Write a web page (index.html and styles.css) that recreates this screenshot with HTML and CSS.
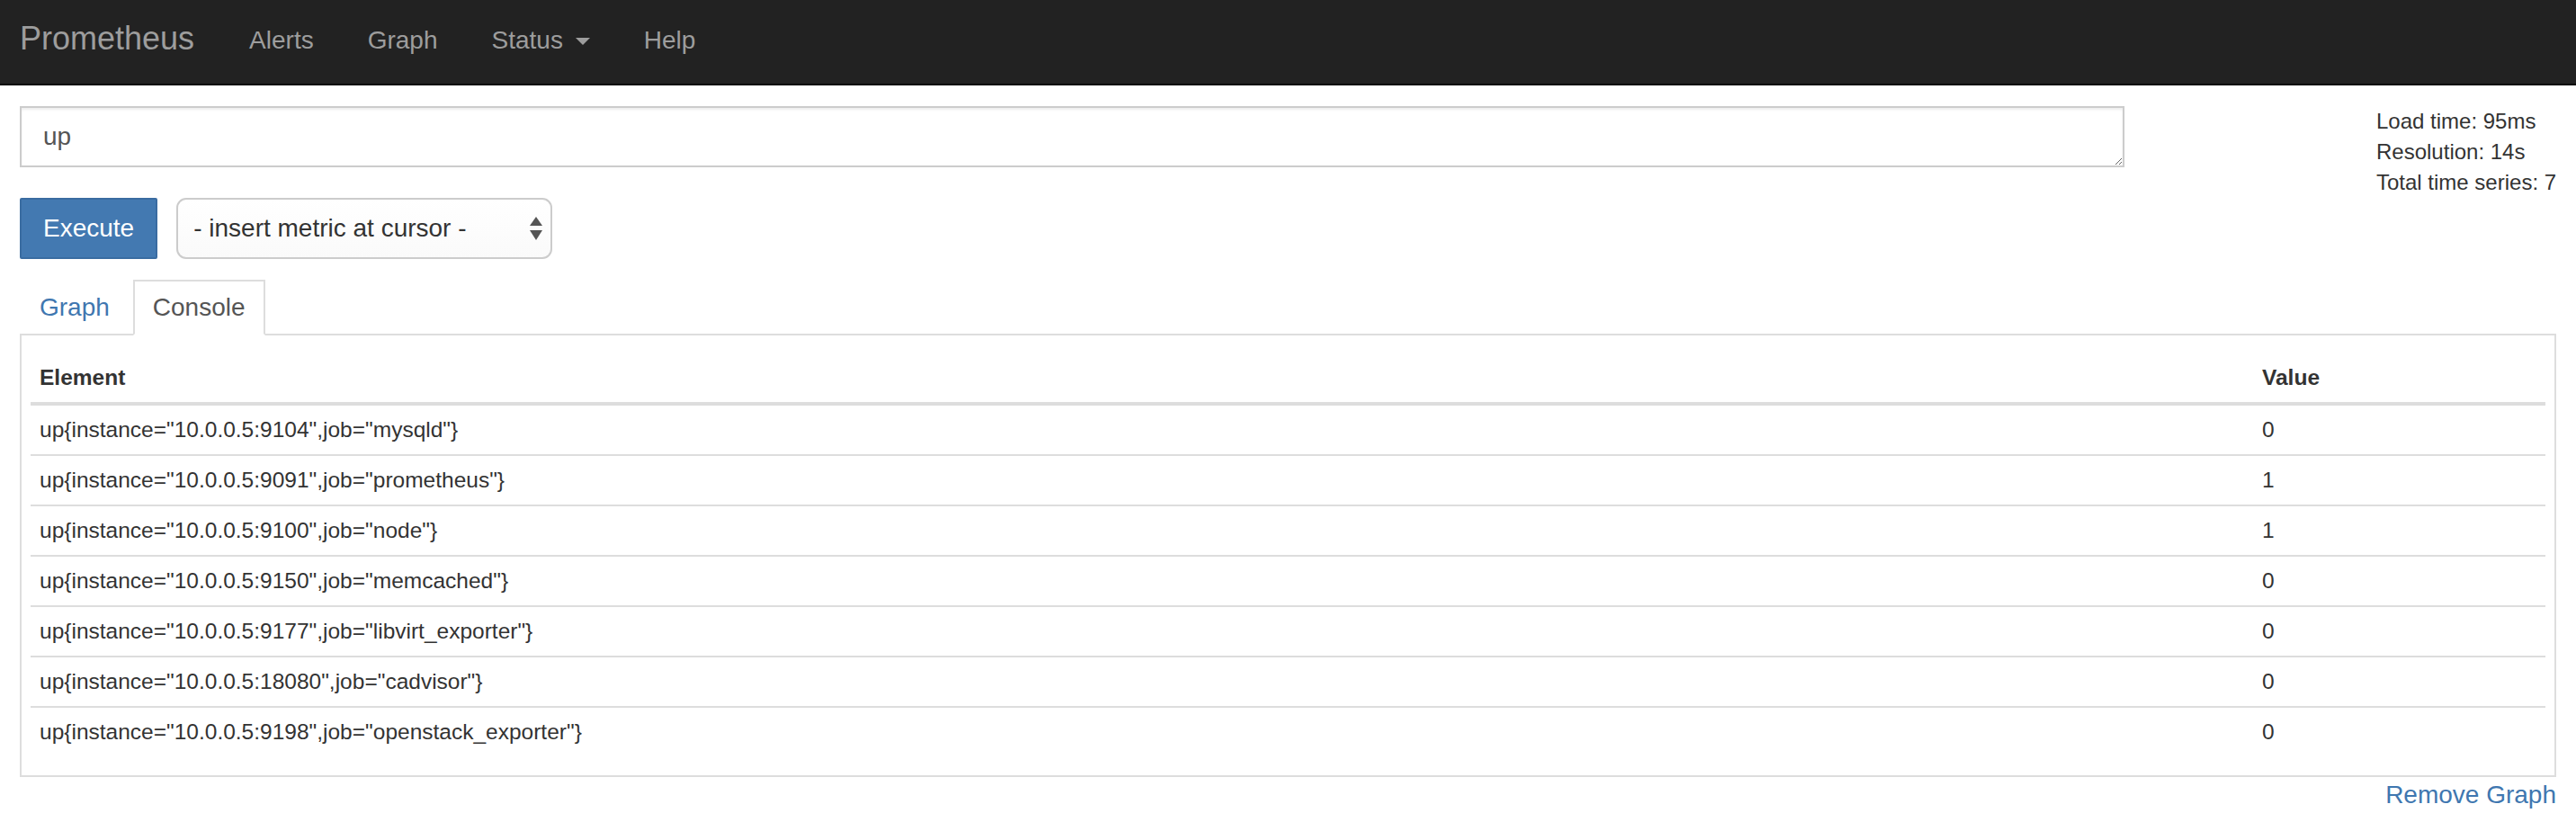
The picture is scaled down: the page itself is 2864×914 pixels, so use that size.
FILE: index.html
```html
<!DOCTYPE html>
<html lang="en">
<head>
<meta charset="utf-8">
<title>Prometheus Time Series Collection and Processing Server</title>
<link rel="stylesheet" href="styles.css">
</head>
<body>
<nav class="navbar">
  <a class="brand" href="#">Prometheus</a>
  <ul class="nav">
    <li><a href="#">Alerts</a></li>
    <li><a href="#">Graph</a></li>
    <li><a href="#">Status <span class="caret"></span></a></li>
    <li><a href="#">Help</a></li>
  </ul>
</nav>
<main class="page">
  <div class="query-row">
    <div class="query-col">
      <textarea class="expr" rows="1">up</textarea>
      <div class="controls">
        <button class="btn-exec" type="button">Execute</button>
        <div class="metric-select">
          <span>- insert metric at cursor -</span>
          <svg class="updown" width="14" height="26" viewBox="0 0 14 26"><polygon points="7,0 14,10 0,10" fill="#555"/><polygon points="0,15 14,15 7,26" fill="#555"/></svg>
        </div>
      </div>
    </div>
    <div class="stats">
      <div>Load time: 95ms</div>
      <div>Resolution: 14s</div>
      <div>Total time series: 7</div>
    </div>
  </div>
  <ul class="tabs">
    <li class="tab"><a href="#">Graph</a></li>
    <li class="tab active"><a href="#">Console</a></li>
  </ul>
  <div class="tab-panel">
    <table class="console">
      <thead>
        <tr><th>Element</th><th class="value">Value</th></tr>
      </thead>
      <tbody>
        <tr><td>up{instance="10.0.0.5:9104",job="mysqld"}</td><td>0</td></tr>
        <tr><td>up{instance="10.0.0.5:9091",job="prometheus"}</td><td>1</td></tr>
        <tr><td>up{instance="10.0.0.5:9100",job="node"}</td><td>1</td></tr>
        <tr><td>up{instance="10.0.0.5:9150",job="memcached"}</td><td>0</td></tr>
        <tr><td>up{instance="10.0.0.5:9177",job="libvirt_exporter"}</td><td>0</td></tr>
        <tr><td>up{instance="10.0.0.5:18080",job="cadvisor"}</td><td>0</td></tr>
        <tr><td>up{instance="10.0.0.5:9198",job="openstack_exporter"}</td><td>0</td></tr>
      </tbody>
    </table>
  </div>
  <div class="remove-row"><a href="#">Remove Graph</a></div>
</main>
</body>
</html>
```

FILE: styles.css
```css
* { box-sizing: border-box; }

html, body {
  margin: 0;
  padding: 0;
  background: #fff;
  font-family: "Liberation Sans", Arial, Helvetica, sans-serif;
  color: #333;
}

a { text-decoration: none; }

.navbar {
  display: flex;
  align-items: center;
  height: 95px;
  background: #222;
  border-bottom: 2px solid #080808;
  padding-left: 22px;
}

.brand {
  font-size: 36px;
  color: #9d9d9d;
  padding-right: 31px;
  padding-bottom: 8px;
  line-height: 40px;
}

.nav {
  display: flex;
  list-style: none;
  margin: 0;
  padding: 0;
}

.nav a {
  display: block;
  font-size: 28px;
  line-height: 40px;
  color: #9d9d9d;
  padding: 0 30px 4px;
}

.caret {
  display: inline-block;
  width: 0;
  height: 0;
  margin-left: 6px;
  vertical-align: middle;
  border-top: 8px solid #9d9d9d;
  border-left: 8px solid transparent;
  border-right: 8px solid transparent;
}

.page {
  padding: 23px 22px 0;
}

.query-row {
  display: grid;
  grid-template-columns: 2340px 1fr;
  column-gap: 280px;
}

.expr {
  display: block;
  width: 100%;
  height: 68px;
  margin: 0;
  padding: 12px 24px;
  font-family: "Liberation Sans", Arial, Helvetica, sans-serif;
  font-size: 28px;
  line-height: 40px;
  color: #555;
  background: #fff;
  border: 2px solid #ccc;
  border-radius: 0;
  box-shadow: inset 0 2px 3px rgba(0, 0, 0, 0.075);
  resize: vertical;
  outline: none;
}

.controls {
  display: flex;
  align-items: center;
  gap: 21px;
  margin-top: 34px;
}

.btn-exec {
  height: 68px;
  padding: 0 24px;
  font-family: "Liberation Sans", Arial, Helvetica, sans-serif;
  font-size: 28px;
  color: #fff;
  background: #4379b1;
  border: 2px solid #3a6ca1;
  border-radius: 2px;
}

.metric-select {
  display: flex;
  align-items: center;
  justify-content: space-between;
  width: 418px;
  height: 68px;
  padding: 0 9px 0 17px;
  font-size: 28px;
  color: #333;
  background: linear-gradient(#fff, #fafafa);
  border: 2px solid #ccc;
  border-radius: 11px;
}

.updown { display: block; }

.stats {
  font-size: 24px;
  line-height: 34px;
  color: #333;
  white-space: nowrap;
}

.tabs {
  display: flex;
  list-style: none;
  margin: 23px 0 0;
  padding: 0;
  border-bottom: 2px solid #ddd;
}

.tab {
  margin-right: 4px;
  margin-bottom: -2px;
}

.tab a {
  display: block;
  font-size: 28px;
  line-height: 30px;
  padding: 14px 20px;
  color: #3f77b0;
  border: 2px solid transparent;
  border-bottom: 0;
  height: 62px;
}

.tab.active a {
  color: #555;
  background: #fff;
  border-color: #ddd;
  border-bottom: 2px solid #fff;
}

.tab-panel {
  border: 2px solid #ddd;
  border-top: 0;
  padding: 20px 10px 21px;
}

.console {
  width: 100%;
  border-collapse: collapse;
  font-size: 24.5px;
  color: #333;
}

.console th,
.console td {
  text-align: left;
  padding: 10px;
  line-height: 34px;
  vertical-align: top;
}

.console th {
  font-weight: bold;
  border-bottom: 4px solid #ddd;
}

.console th.value { width: 325px; }

.console tbody td { border-top: 2px solid #ddd; }

.console tbody tr:first-child td { border-top: 0; }

.remove-row {
  display: flex;
  justify-content: flex-end;
}

.remove-row a {
  font-size: 28px;
  line-height: 40px;
  color: #3f77b0;
}
```
